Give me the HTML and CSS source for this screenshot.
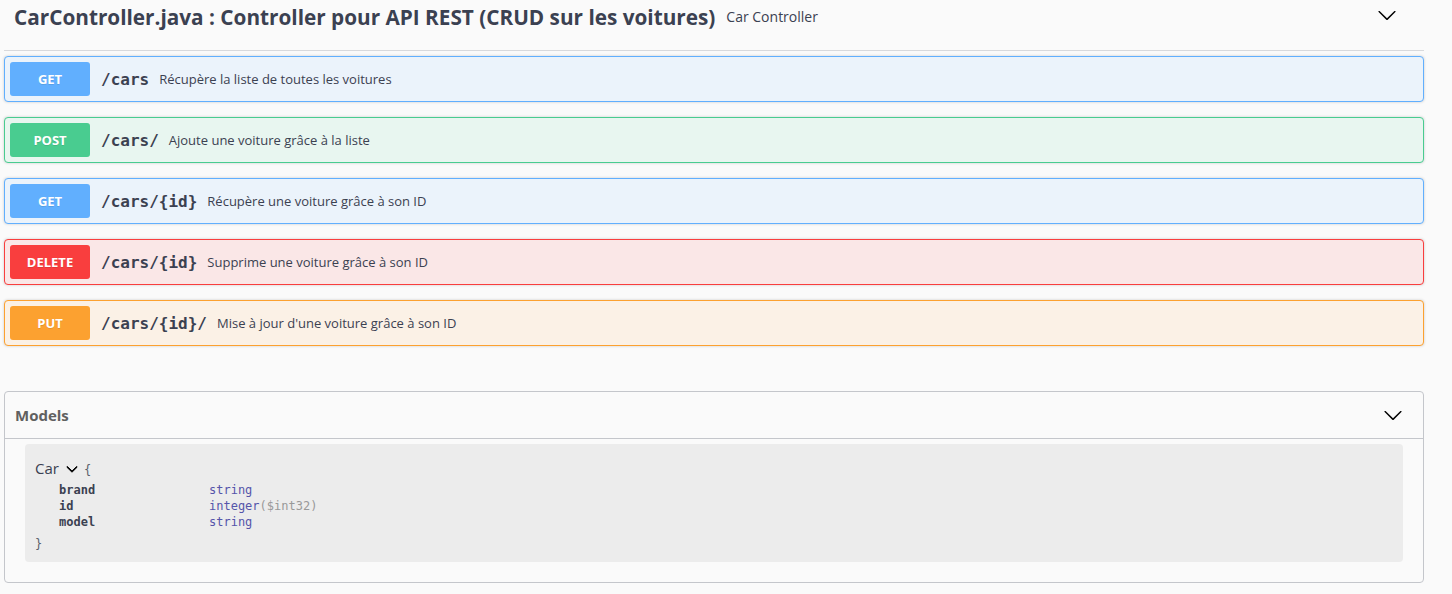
FILE: index.html
```html
<!DOCTYPE html>
<html lang="fr">
<head>
<meta charset="utf-8">
<title>Swagger UI</title>
<link rel="stylesheet" href="styles.css">
</head>
<body>
<div class="wrapper">
  <section class="tag-section">
    <h3 class="tag">
      <span class="tag-title">CarController.java : Controller pour API REST (CRUD sur les voitures)</span>
      <small class="tag-desc">Car Controller</small>
      <span class="spacer"></span>
      <svg class="arrow tag-arrow" width="20" height="20" viewBox="0 0 20 20"><path d="M17.418 6.109c.272-.268.709-.268.979 0s.271.701 0 .969l-7.908 7.83c-.27.268-.707.268-.979 0l-7.908-7.83c-.27-.268-.27-.701 0-.969.271-.268.709-.268.979 0L10 13.25l7.418-7.141z"/></svg>
    </h3>

    <div class="opblock get">
      <span class="method">GET</span>
      <span class="path">/cars</span>
      <span class="desc">Récupère la liste de toutes les voitures</span>
    </div>
    <div class="opblock post">
      <span class="method">POST</span>
      <span class="path">/cars/</span>
      <span class="desc">Ajoute une voiture grâce à la liste</span>
    </div>
    <div class="opblock get">
      <span class="method">GET</span>
      <span class="path">/cars/{id}</span>
      <span class="desc">Récupère une voiture grâce à son ID</span>
    </div>
    <div class="opblock delete">
      <span class="method">DELETE</span>
      <span class="path">/cars/{id}</span>
      <span class="desc">Supprime une voiture grâce à son ID</span>
    </div>
    <div class="opblock put">
      <span class="method">PUT</span>
      <span class="path">/cars/{id}/</span>
      <span class="desc">Mise à jour d'une voiture grâce à son ID</span>
    </div>
  </section>

  <section class="models">
    <h4 class="models-head">
      <span>Models</span>
      <span class="spacer"></span>
      <svg class="arrow" width="20" height="20" viewBox="0 0 20 20"><path d="M17.418 6.109c.272-.268.709-.268.979 0s.271.701 0 .969l-7.908 7.83c-.27.268-.707.268-.979 0l-7.908-7.83c-.27-.268-.27-.701 0-.969.271-.268.709-.268.979 0L10 13.25l7.418-7.141z"/></svg>
    </h4>
    <div class="model-box">
      <div class="model-title">
        <span class="model-name">Car</span>
        <svg class="model-toggle" width="12" height="12" viewBox="0 0 20 20"><path d="M17.418 6.109c.272-.268.709-.268.979 0s.271.701 0 .969l-7.908 7.83c-.27.268-.707.268-.979 0l-7.908-7.830c-.27-.268-.27-.701 0-.969.271-.268.709-.268.979 0L10 13.25l7.418-7.141z" stroke="#000" stroke-width="1.6"/></svg>
        <span class="brace">{</span>
      </div>
      <div class="props">
        <div class="prop"><span class="prop-name">brand</span><span class="prop-type">string</span></div>
        <div class="prop"><span class="prop-name">id</span><span class="prop-type">integer<span class="prop-format">($int32)</span></span></div>
        <div class="prop"><span class="prop-name">model</span><span class="prop-type">string</span></div>
      </div>
      <div class="brace close">}</div>
    </div>
  </section>
</div>
</body>
</html>
```

FILE: styles.css
```css
html, body {
  margin: 0;
  padding: 0;
  background: #fafafa;
}

body {
  font-family: "Open Sans", "Noto Sans", sans-serif;
  color: #3b4151;
}

.wrapper {
  padding: 0 28px 0 4px;
}

.spacer {
  flex: 1;
}

.arrow {
  fill: #000;
  flex: none;
}

/* tag header */
.tag {
  display: flex;
  align-items: center;
  height: 51px;
  box-sizing: border-box;
  margin: 0 0 5px;
  padding: 0 27px 17px 10px;
  border-bottom: 1px solid #d8d9dc;
}

.tag-title {
  font-size: 20.75px;
  font-weight: 700;
  line-height: 34px;
  color: #3b4151;
}

.tag-desc {
  font-size: 14px;
  font-weight: 400;
  padding: 0 11px;
  color: #3b4151;
}

.tag-arrow {
  margin-bottom: 3px;
}

/* operation blocks */
.opblock {
  display: flex;
  align-items: center;
  padding: 5px;
  margin-bottom: 15px;
  border: 1px solid;
  border-radius: 4px;
  box-shadow: 0 0 3px rgba(0, 0, 0, 0.19);
}

.method {
  flex: none;
  width: 80px;
  height: 34px;
  box-sizing: border-box;
  display: flex;
  align-items: center;
  justify-content: center;
  border-radius: 3px;
  font-size: 13px;
  font-weight: 700;
  color: #fff;
  text-shadow: 0 1px 0 rgba(0, 0, 0, 0.1);
}

.path {
  font-family: "DejaVu Sans Mono", "Liberation Mono", monospace;
  font-size: 16px;
  font-weight: 700;
  padding: 0 10px 0 11px;
  color: #3b4151;
}

.desc {
  font-size: 13px;
  color: #3b4151;
}

.opblock.get { background: #ebf3fb; border-color: #61affe; }
.opblock.get .method { background: #61affe; }
.opblock.post { background: #e8f6f0; border-color: #49cc90; }
.opblock.post .method { background: #49cc90; }
.opblock.delete { background: #fae7e7; border-color: #f93e3e; }
.opblock.delete .method { background: #f93e3e; }
.opblock.put { background: #fbf1e6; border-color: #fca130; }
.opblock.put .method { background: #fca130; }

/* models */
.models {
  margin-top: 45px;
  border: 1px solid #c4c6cb;
  border-radius: 4px;
}

.models-head {
  display: flex;
  align-items: center;
  height: 47px;
  box-sizing: border-box;
  margin: 0;
  padding: 0 20px 0 10px;
  font-size: 15px;
  font-weight: 700;
  color: #606060;
  border-bottom: 1px solid #c4c6cb;
}

.model-box {
  margin: 5px 20px 20px;
  padding: 12px 10px 10px;
  background: #ececec;
  border-radius: 4px;
  font-family: "DejaVu Sans Mono", "Liberation Mono", monospace;
  font-size: 12px;
  color: #3b4151;
}

.model-title {
  display: flex;
  align-items: center;
  height: 24px;
  margin-bottom: 2px;
}

.model-name {
  font-family: "Open Sans", "Noto Sans", sans-serif;
  font-size: 15px;
  color: #3b4151;
}

.model-toggle {
  margin: 2px 6px 0 7px;
}

.brace {
  font-size: 12px;
  color: #5a5f6b;
  padding-top: 3px;
}

.brace.close {
  line-height: 16px;
  margin-top: 6px;
  padding-top: 0;
}

.prop {
  display: flex;
  line-height: 16px;
  padding-left: 24px;
}

.prop-name {
  width: 150px;
  font-weight: 700;
  color: #3b4151;
}

.prop-type {
  color: #55a;
}

.prop-format {
  color: #999;
}
```
